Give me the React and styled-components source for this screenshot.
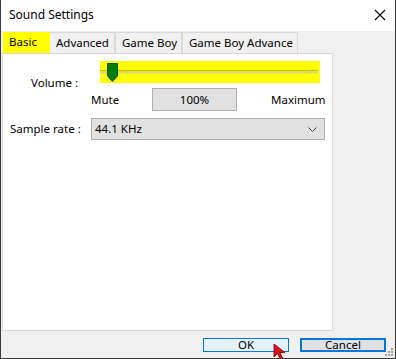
import React from "react";
import styled, { createGlobalStyle } from "styled-components";

const Global = createGlobalStyle`
  html, body { margin: 0; padding: 0; background: #ffffff; }
  body { font-family: "Noto Sans", "Open Sans", sans-serif; font-size: 11.5px; color: #000; }
  * { box-sizing: border-box; }
`;

const Window = styled.div`
  position: relative;
  width: 396px;
  height: 359px;
  background: #f0f0f0;
  border-left: 1px solid #3a3a3a;
  border-right: 1px solid #3a3a3a;
  border-bottom: 1px solid #3a3a3a;
  display: flex;
  flex-direction: column;
  overflow: hidden;
`;

const TitleBar = styled.div`
  height: 31px;
  flex: none;
  background: #ffffff;
  display: flex;
  align-items: center;
  justify-content: space-between;
  padding: 0 9px 1px 8px;
`;

const Title = styled.span`
  font-size: 12px;
  line-height: 16px;
`;

const Close = styled.svg`
  width: 12px;
  height: 12px;
`;

const TabRow = styled.div`
  height: 22px;
  flex: none;
  display: flex;
  align-items: flex-end;
  padding-left: 2px;
`;

const Tab = styled.div`
  height: 21px;
  display: flex;
  align-items: center;
  padding: 0 0 1px ${(p) => p.$pad}px;
  background: ${(p) => (p.$active ? "#ffff00" : "#f0f0f0")};
  border: ${(p) => (p.$active ? "none" : "1px solid #d9d9d9")};
  border-bottom: none;
  border-left: ${(p) => (p.$first || p.$active ? "none" : "1px solid #d9d9d9")};
  width: ${(p) => p.$w}px;
  white-space: nowrap;
  overflow: hidden;
  line-height: 14px;
`;

const Panel = styled.div`
  margin-left: 1px;
  width: 331px;
  height: 278px;
  flex: none;
  background: #ffffff;
  border: 1px solid #d9d9d9;
  display: flex;
  flex-direction: column;
`;

const Row = styled.div`
  display: flex;
  align-items: ${(p) => p.$align || "center"};
  margin-top: ${(p) => p.$mt}px;
  padding-left: ${(p) => p.$pl}px;
`;

const Label = styled.span`
  width: ${(p) => p.$w}px;
  flex: none;
  margin-top: ${(p) => p.$mt || 0}px;
  line-height: 14px;
  white-space: nowrap;
`;

const SliderBox = styled.div`
  position: relative;
  width: 220px;
  height: 22px;
  flex: none;
  background: #ffff00;
  display: flex;
  align-items: center;
`;

const Track = styled.div`
  width: 218px;
  height: 4px;
  margin-top: -1px;
  background: #e6e600;
  border-top: 1px solid #bcbc40;
  border-bottom: 1px solid #e0e0a0;
`;

const Thumb = styled.svg`
  position: absolute;
  left: 7px;
  top: 2px;
  width: 11px;
  height: 19px;
`;

const ValueBox = styled.div`
  width: 85px;
  height: 23px;
  flex: none;
  background: #e1e1e1;
  border: 1px solid #adadad;
  display: flex;
  align-items: center;
  justify-content: center;
  line-height: 14px;
`;

const Spacer = styled.div`
  width: ${(p) => p.$w}px;
  flex: none;
`;

const Combo = styled.div`
  width: 234px;
  height: 22px;
  flex: none;
  background: #e1e1e1;
  border: 1px solid #adadad;
  display: flex;
  align-items: center;
  justify-content: space-between;
  padding: 0 7px 0 3px;
  line-height: 14px;
`;

const Chevron = styled.svg`
  width: 9px;
  height: 5px;
`;

const ButtonBar = styled.div`
  flex: 1;
  display: flex;
  justify-content: flex-end;
  align-items: flex-start;
  padding: 7px 9px 0 0;
  gap: 11px;
`;

const Button = styled.div`
  width: ${(p) => p.$w}px;
  height: 14px;
  display: flex;
  align-items: center;
  justify-content: center;
  background: ${(p) => (p.$default ? "#e5f1fb" : "#e1e1e1")};
  border: ${(p) => (p.$default ? "1px solid #0078d7" : "2px solid #0078d7")};
  line-height: 12px;
`;

const Grip = styled.svg`
  position: absolute;
  right: 1px;
  bottom: 1px;
  width: 10px;
  height: 10px;
`;

const Cursor = styled.svg`
  position: absolute;
  left: 272px;
  top: 343px;
  width: 16px;
  height: 16px;
`;

export default function App() {
  return (
    <>
      <Global />
      <Window>
        <TitleBar>
          <Title>Sound Settings</Title>
          <Close viewBox="0 0 12 12">
            <path d="M1 1 L11 11 M11 1 L1 11" stroke="#000" strokeWidth="1.1" fill="none" />
          </Close>
        </TitleBar>
        <TabRow>
          <Tab $active $w={47} $pad={6}>Basic</Tab>
          <Tab $first $w={65} $pad={6}>Advanced</Tab>
          <Tab $w={67} $pad={6}>Game Boy</Tab>
          <Tab $w={116} $pad={6}>Game Boy Advance</Tab>
        </TabRow>
        <Panel>
          <Row $mt={7} $pl={28} $align="flex-start">
            <Label $w={69} $mt={15}>Volume :</Label>
            <SliderBox>
              <Track />
              <Thumb viewBox="0 0 11 19">
                <path d="M0.5 0.5 H10.5 V13 L5.5 18.5 L0.5 13 Z" fill="#007d00" stroke="#005a00" strokeWidth="1" />
              </Thumb>
            </SliderBox>
          </Row>
          <Row $mt={-2} $pl={88}>
            <Label $w={61}>Mute</Label>
            <ValueBox>100%</ValueBox>
            <Spacer $w={34} />
            <Label $w={60}>Maximum</Label>
          </Row>
          <Row $mt={7} $pl={7}>
            <Label $w={81}>Sample rate :</Label>
            <Combo>
              <span>44.1 KHz</span>
              <Chevron viewBox="0 0 9 5">
                <path d="M0.5 0.5 L4.5 4.5 L8.5 0.5" stroke="#444" strokeWidth="1" fill="none" />
              </Chevron>
            </Combo>
          </Row>
        </Panel>
        <ButtonBar>
          <Button $default $w={86}>OK</Button>
          <Button $w={86}>Cancel</Button>
        </ButtonBar>
        <Grip viewBox="0 0 10 10">
          <g fill="#a0a0a0">
            <rect x="7" y="1" width="2" height="2" />
            <rect x="4" y="4" width="2" height="2" />
            <rect x="7" y="4" width="2" height="2" />
            <rect x="1" y="7" width="2" height="2" />
            <rect x="4" y="7" width="2" height="2" />
            <rect x="7" y="7" width="2" height="2" />
          </g>
        </Grip>
        <Cursor viewBox="0 0 16 16">
          <path d="M1 1 L1 14 L4.5 10.5 L7 16 L9.5 15 L7 9.5 L12 9.5 Z" fill="#e0101a" stroke="#7a0000" strokeWidth="0.8" />
        </Cursor>
      </Window>
    </>
  );
}
